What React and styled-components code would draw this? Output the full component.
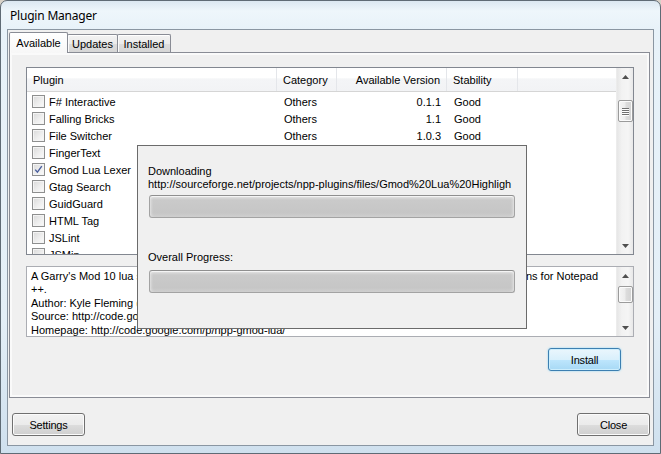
import React from "react";
import styled, { createGlobalStyle } from "styled-components";

const UI = `"Liberation Sans", Arial, sans-serif`;

const GlobalStyle = createGlobalStyle`
  * { box-sizing: border-box; }
  html, body { margin: 0; padding: 0; }
  body {
    background: #d8d2c8;
    font-family: ${UI};
    font-size: 11px;
    color: #000;
    overflow: hidden;
  }
`;

const Window = styled.div`
  position: relative;
  width: 661px;
  height: 454px;
  display: flex;
  flex-direction: column;
  border: 1px solid #5f6b75;
  border-radius: 7px 7px 0 0;
  background: linear-gradient(180deg, #dbe7f1 0px, #eef6fb 10px, #e8f2f9 28px, #e4eff7 70%, #cfe0ee 100%);
  overflow: hidden;
`;

const TitleBar = styled.div`
  flex: none;
  height: 28px;
  display: flex;
  align-items: center;
  padding-left: 9px;
  font-family: "Noto Sans", "Open Sans", sans-serif;
  font-size: 12px;
  letter-spacing: -0.2px;
  color: #000;
`;

const Client = styled.div`
  flex: none;
  height: 417px;
  margin: 0 6px;
  border: 1px solid #8a96a2;
  background: #f0f0f0;
  display: flex;
  flex-direction: column;
  padding: 1px 3px 0 1px;
`;

const TabStrip = styled.div`
  flex: none;
  height: 21px;
  display: flex;
  align-items: flex-end;
`;

const Tab = styled.div`
  position: relative;
  z-index: ${(p) => (p.$active ? 2 : 0)};
  width: ${(p) => p.$w}px;
  height: ${(p) => (p.$active ? 21 : 18)}px;
  margin-bottom: ${(p) => (p.$active ? -1 : 0)}px;
  margin-left: ${(p) => (p.$first ? 0 : -1)}px;
  border: 1px solid #898c95;
  border-bottom: none;
  border-radius: 2px 2px 0 0;
  background: ${(p) =>
    p.$active
      ? "linear-gradient(180deg, #ffffff, #f7f7f7)"
      : "linear-gradient(180deg, #f3f3f3 0%, #ebebeb 50%, #dddddd 51%, #d6d6d6 100%)"};
  box-shadow: inset 0 1px 0 #fff, inset 1px 0 0 #fbfbfb;
  display: flex;
  align-items: center;
  justify-content: center;
  font-size: 11px;
  white-space: nowrap;
`;

const Panel = styled.div`
  position: relative;
  z-index: 1;
  flex: none;
  height: 346px;
  border: 1px solid #898c95;
  background: #f0f0f0;
  box-shadow: inset 0 0 0 2px #fafafa;
  padding: 14px 15px 0 16px;
  display: flex;
  flex-direction: column;
`;

const ListBox = styled.div`
  flex: none;
  height: 188px;
  border: 1px solid #828790;
  background: #fff;
  display: flex;
  overflow: hidden;
`;

const ListBody = styled.div`
  flex: 1;
  min-width: 0;
  display: flex;
  flex-direction: column;
  overflow: hidden;
`;

const HeaderRow = styled.div`
  flex: none;
  height: 24px;
  display: flex;
  border-bottom: 1px solid #d5d5d5;
  background: linear-gradient(180deg, #ffffff 0%, #ffffff 45%, #f4f5f7 46%, #f2f3f5 100%);
`;

const HeaderCell = styled.div`
  flex: ${(p) => (p.$w ? `none` : 1)};
  width: ${(p) => (p.$w ? `${p.$w}px` : "auto")};
  display: flex;
  align-items: center;
  justify-content: ${(p) => (p.$right ? "flex-end" : "flex-start")};
  padding: ${(p) => (p.$right ? "0 6px 0 0" : "0 0 0 6px")};
  border-right: ${(p) => (p.$last ? "none" : "1px solid #e4e6ea")};
  white-space: nowrap;
`;

const Rows = styled.div`
  padding-top: 1px;
  display: flex;
  flex-direction: column;
`;

const Row = styled.div`
  flex: none;
  height: 17px;
  display: flex;
  align-items: center;
`;

const Cell = styled.div`
  flex: none;
  width: ${(p) => p.$w}px;
  display: flex;
  align-items: center;
  justify-content: ${(p) => (p.$right ? "flex-end" : "flex-start")};
  padding: ${(p) => (p.$right ? "0 6px 0 0" : `0 0 0 ${p.$pad ?? 7}px`)};
  white-space: nowrap;
  gap: 4px;
`;

const CheckBox = styled.span`
  flex: none;
  width: 13px;
  height: 13px;
  border: 1px solid #8e8f8f;
  background: linear-gradient(135deg, #d9d9d9 0%, #eeeeee 55%, #fbfbfb 100%);
  box-shadow: inset 0 0 0 1px #f4f4f4;
  display: flex;
  align-items: center;
  justify-content: center;
`;

const ScrollBar = styled.div`
  flex: none;
  width: 17px;
  display: flex;
  flex-direction: column;
  background: linear-gradient(90deg, #e6e6e6 0%, #f2f2f2 30%, #f5f5f5 70%, #e8e8e8 100%);
  border-left: 1px solid #ececec;
`;

const ArrowButton = styled.div`
  flex: none;
  height: 17px;
  display: flex;
  align-items: center;
  justify-content: center;
`;

const Track = styled.div`
  flex: 1;
  display: flex;
  flex-direction: column;
  align-items: center;
`;

const Thumb = styled.div`
  flex: none;
  width: 15px;
  height: ${(p) => p.$h}px;
  margin-top: ${(p) => p.$top}px;
  border: 1px solid #9b9b9b;
  border-radius: 2px;
  background: linear-gradient(90deg, #f5f5f5 0%, #ececec 45%, #dcdcdc 55%, #d2d2d2 100%);
  box-shadow: inset 0 0 0 1px #fbfbfb;
  display: flex;
  flex-direction: column;
  align-items: center;
  justify-content: center;
  gap: 1px;
`;

const GripLine = styled.span`
  width: 7px;
  height: 1px;
  background: #6f6f6f;
  box-shadow: 0 1px 0 #fdfdfd;
`;

const DescBox = styled.div`
  flex: none;
  height: 71px;
  margin-top: 11px;
  border: 1px solid #abadb3;
  background: #fff;
  display: flex;
  overflow: hidden;
`;

const DescText = styled.div`
  flex: 1;
  min-width: 0;
  padding: 3px 0 0 4px;
  line-height: 13.4px;
  overflow: hidden;
`;

const DescLine = styled.div`
  white-space: nowrap;
`;

const ActionRow = styled.div`
  flex: none;
  margin-top: 11px;
  display: flex;
  justify-content: flex-end;
  padding-right: 13px;
`;

const Button = styled.div`
  flex: none;
  width: 73px;
  height: 23px;
  border: 1px solid ${(p) => (p.$default ? "#3c7fb1" : "#707070")};
  border-radius: 3px;
  background: ${(p) =>
    p.$default
      ? "linear-gradient(180deg, #eaf6fd 0%, #d9f0fc 50%, #bee6fd 51%, #a7d9f5 100%)"
      : "linear-gradient(180deg, #f2f2f2 0%, #ebebeb 50%, #dddddd 51%, #cfcfcf 100%)"};
  box-shadow: inset 0 0 0 1px ${(p) => (p.$default ? "#cdeefd" : "#fbfbfb")}
    ${(p) => (p.$default ? ", 0 0 2px #7fd0f5" : "")};
  display: flex;
  align-items: center;
  justify-content: center;
  font-size: 11px;
  letter-spacing: -0.2px;
`;

const FooterRow = styled.div`
  flex: none;
  margin-top: 15px;
  display: flex;
  justify-content: space-between;
  padding-left: 3px;
`;

const ProgressDialog = styled.div`
  position: absolute;
  left: 136px;
  top: 144px;
  width: 390px;
  height: 184px;
  z-index: 5;
  border: 1px solid #6b6b6b;
  background: #f0f0f0;
  padding: 19px 0 0 10px;
  display: flex;
  flex-direction: column;
`;

const DialogLabel = styled.div`
  line-height: 13px;
  white-space: nowrap;
  margin-top: ${(p) => p.$mt || 0}px;
`;

const ProgressTrack = styled.div`
  flex: none;
  width: 366px;
  height: 23px;
  margin: ${(p) => p.$mt}px 0 0 1px;
  border: 1px solid #a3a3a3;
  border-top-color: #8f8f8f;
  border-radius: 3px;
  background: linear-gradient(180deg, #ebebeb 0px, #d6d6d6 2px, #cacaca 4px, #c6c6c6 80%, #cfcfcf 100%);
  box-shadow: inset 0 1px 0 #f4f4f4, inset 3px 0 3px -2px #e6e6e6, inset -3px 0 3px -2px #e6e6e6;
`;

const Arrow = ({ up }) => (
  <svg width="7" height="4" viewBox="0 0 7 4">
    <path d={up ? "M0 4 L3.5 0 L7 4 Z" : "M0 0 L3.5 4 L7 0 Z"} fill="#4f4f4f" />
  </svg>
);

const Scroller = ({ thumbTop, thumbH, grip }) => (
  <ScrollBar>
    <ArrowButton>
      <Arrow up />
    </ArrowButton>
    <Track>
      <Thumb $top={thumbTop} $h={thumbH}>
        {grip && (
          <>
            <GripLine />
            <GripLine />
            <GripLine />
            <GripLine />
          </>
        )}
      </Thumb>
    </Track>
    <ArrowButton>
      <Arrow />
    </ArrowButton>
  </ScrollBar>
);

const Check = ({ checked }) => (
  <CheckBox>
    {checked && (
      <svg width="9" height="9" viewBox="0 0 9 9">
        <path d="M1.2 4.6 L3.4 7.2 L7.8 1.2" fill="none" stroke="#4a5f9e" strokeWidth="1.4" />
      </svg>
    )}
  </CheckBox>
);

const COLS = [
  { key: "name", label: "Plugin", w: 250 },
  { key: "cat", label: "Category", w: 60 },
  { key: "ver", label: "Available Version", w: 110, right: true },
  { key: "stab", label: "Stability", w: 71 },
];

/* Rows from FingerText down lie under the download dialog, so their
   other columns are not shown in the picture. */
const PLUGINS = [
  { name: "F# Interactive", cat: "Others", ver: "0.1.1", stab: "Good" },
  { name: "Falling Bricks", cat: "Others", ver: "1.1", stab: "Good" },
  { name: "File Switcher", cat: "Others", ver: "1.0.3", stab: "Good" },
  { name: "FingerText" },
  { name: "Gmod Lua Lexer", checked: true },
  { name: "Gtag Search" },
  { name: "GuidGuard" },
  { name: "HTML Tag" },
  { name: "JSLint" },
  { name: "JSMin" },
];

const DESCRIPTION = [
  "A Garry's Mod 10 lua syntax highlighting and autocompletion lexer for use with the external lexer plugins for Notepad",
  "++.",
  "Author: Kyle Fleming (kylefleming@gmail.com)",
  "Source: http://code.google.com/p/npp-gmod-lua/",
  "Homepage: http://code.google.com/p/npp-gmod-lua/",
];

export default function App() {
  return (
    <>
      <GlobalStyle />
      <Window>
        <TitleBar>Plugin Manager</TitleBar>
        <Client>
          <TabStrip>
            <Tab $active $first $w={59}>Available</Tab>
            <Tab $w={51}>Updates</Tab>
            <Tab $w={54}>Installed</Tab>
          </TabStrip>
          <Panel>
            <ListBox>
              <ListBody>
                <HeaderRow>
                  {COLS.map((c) => (
                    <HeaderCell key={c.key} $w={c.w} $right={c.right}>
                      {c.label}
                    </HeaderCell>
                  ))}
                  <HeaderCell $last />
                </HeaderRow>
                <Rows>
                  {PLUGINS.map((p) => (
                    <Row key={p.name}>
                      <Cell $w={250} $pad={5}>
                        <Check checked={p.checked} />
                        {p.name}
                      </Cell>
                      <Cell $w={60}>{p.cat}</Cell>
                      <Cell $w={110} $right>
                        {p.ver}
                      </Cell>
                      <Cell $w={71}>{p.stab}</Cell>
                    </Row>
                  ))}
                </Rows>
              </ListBody>
              <Scroller thumbTop={15} thumbH={22} grip />
            </ListBox>
            <DescBox>
              <DescText>
                {DESCRIPTION.map((l) => (
                  <DescLine key={l}>{l}</DescLine>
                ))}
              </DescText>
              <Scroller thumbTop={2} thumbH={17} />
            </DescBox>
            <ActionRow>
              <Button $default>Install</Button>
            </ActionRow>
          </Panel>
          <FooterRow>
            <Button>Settings</Button>
            <Button>Close</Button>
          </FooterRow>
        </Client>
        <ProgressDialog>
          <DialogLabel>Downloading</DialogLabel>
          <DialogLabel>http://sourceforge.net/projects/npp-plugins/files/Gmod%20Lua%20Highligh</DialogLabel>
          <ProgressTrack $mt={4} />
          <DialogLabel $mt={33}>Overall Progress:</DialogLabel>
          <ProgressTrack $mt={6} />
        </ProgressDialog>
      </Window>
    </>
  );
}
